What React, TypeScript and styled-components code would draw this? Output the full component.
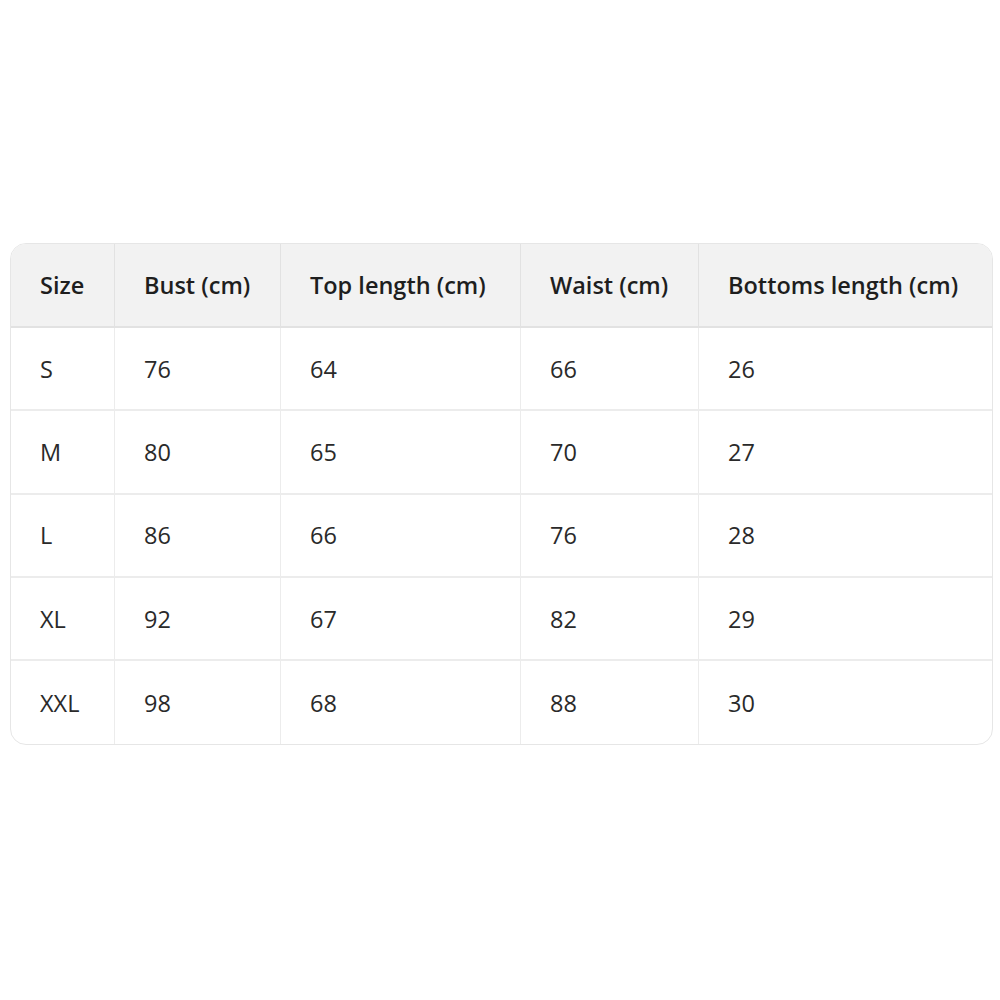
import React from "react";
import styled, { createGlobalStyle } from "styled-components";

const GlobalStyle = createGlobalStyle`
  body {
    margin: 0;
    background: #fff;
    font-family: "Open Sans", "Noto Sans", sans-serif;
  }
`;

const columns = [
  { label: "Size", width: 104 },
  { label: "Bust (cm)", width: 166 },
  { label: "Top length (cm)", width: 240 },
  { label: "Waist (cm)", width: 178 },
  { label: "Bottoms length (cm)", width: 293 },
];

const rows = [
  ["S", "76", "64", "66", "26"],
  ["M", "80", "65", "70", "27"],
  ["L", "86", "66", "76", "28"],
  ["XL", "92", "67", "82", "29"],
  ["XXL", "98", "68", "88", "30"],
];

function App() {
  return (
    <Page>
      <GlobalStyle />
      <Table>
        <colgroup>
          {columns.map((c) => (
            <col key={c.label} style={{ width: c.width }} />
          ))}
        </colgroup>
        <thead>
          <tr>
            {columns.map((c) => (
              <HeadCell key={c.label}>{c.label}</HeadCell>
            ))}
          </tr>
        </thead>
        <tbody>
          {rows.map((row) => (
            <tr key={row[0]}>
              {row.map((value, i) => (
                <Cell key={i}>{value}</Cell>
              ))}
            </tr>
          ))}
        </tbody>
      </Table>
    </Page>
  );
}

const Page = styled.div`
  padding: 243px 7px 0 10px;
`;

const Table = styled.table`
  width: 983px;
  table-layout: fixed;
  border-collapse: separate;
  border-spacing: 0;
  border: 1px solid #e6e6e6;
  border-radius: 16px;
  overflow: hidden;
  color: #1e1e1e;
  font-size: 23.5px;

  tr > *:last-child {
    border-right: none;
  }

  tbody tr:last-child td {
    border-bottom: none;
  }
`;

const HeadCell = styled.th`
  height: 84px;
  box-sizing: border-box;
  padding: 0 0 0 29px;
  text-align: left;
  font-weight: 600;
  background: #f2f2f2;
  border-right: 1px solid #e2e2e2;
  border-bottom: 2px solid #e2e2e2;
  white-space: nowrap;
`;

const Cell = styled.td`
  height: 83.3px;
  box-sizing: border-box;
  padding: 0 0 0 29px;
  text-align: left;
  font-weight: 400;
  color: #2a2a2a;
  border-right: 1px solid #ececec;
  border-bottom: 2px solid #ececec;
`;

export default App;
